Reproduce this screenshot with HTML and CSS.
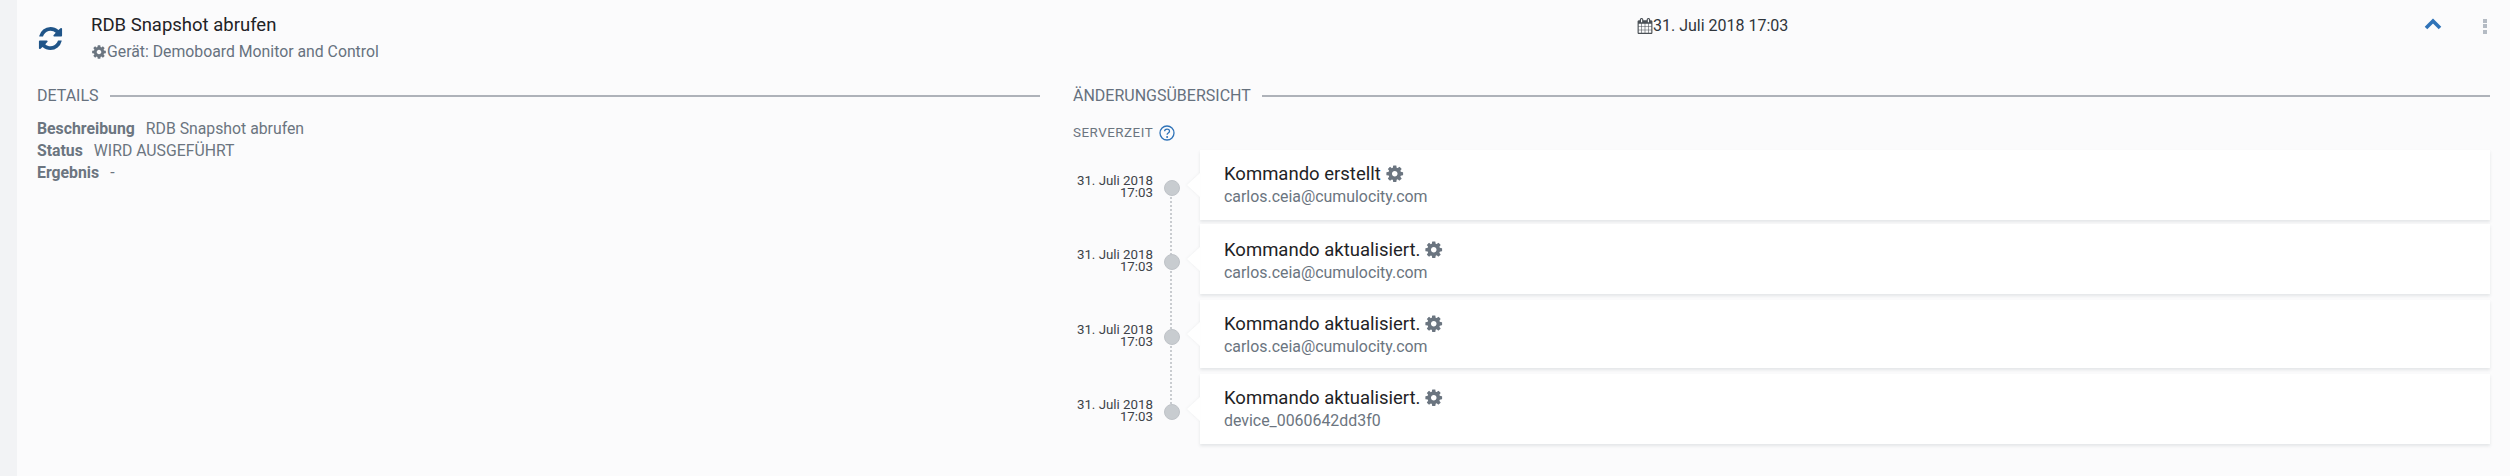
FILE: index.html
```html
<!DOCTYPE html>
<html lang="de">
<head>
<meta charset="utf-8">
<title>RDB Snapshot abrufen</title>
<link rel="stylesheet" href="styles.css">
</head>
<body>
<svg class="defs" width="0" height="0" aria-hidden="true">
  <symbol id="cog" viewBox="0 0 1792 1792"><path d="M1152 896q0-106-75-181t-181-75-181 75-75 181 75 181 181 75 181-75 75-181zm512-109v222q0 12-8 23t-20 13l-185 28q-19 54-39 91 35 50 107 138 10 12 10 25t-9 23q-27 37-99 108t-94 71q-12 0-26-9l-138-108q-44 23-91 38-16 136-29 186-7 28-36 28h-222q-14 0-24.5-8.5t-11.5-21.5l-28-184q-49-16-90-37l-141 107q-10 9-25 9-14 0-25-11-126-114-165-168-7-10-7-23 0-12 8-23 15-21 51-66.5t54-70.5q-27-50-41-99l-183-27q-13-2-21-12.5t-8-23.5v-222q0-12 8-23t19-13l186-28q14-46 39-92-40-57-107-138-10-12-10-24 0-10 9-23 26-36 98.5-107.5t94.5-71.5q13 0 26 10l138 107q44-23 91-38 16-136 29-186 7-28 36-28h222q14 0 24.5 8.5t11.5 21.5l28 184q49 16 90 37l142-107q9-9 24-9 13 0 25 10 129 119 165 170 7 8 7 22 0 12-8 23-15 21-51 66.5t-54 70.5q26 50 41 98l183 28q13 2 21 12.5t8 23.5z"/></symbol>
</svg>
<div class="page">
  <div class="strip"></div>
  <main class="main">
    <header class="head">
      <svg class="refresh" viewBox="0 0 1792 1792"><path d="M1639 1056q0 5-1 7-64 268-268 434.5t-478 166.5q-146 0-282.5-55t-243.5-157l-129 129q-19 19-45 19t-45-19-19-45v-448q0-26 19-45t45-19h448q26 0 45 19t19 45-19 45l-137 137q71 66 161 102t187 36q134 0 250-65t186-179q11-17 53-117 8-23 30-23h192q13 0 22.5 9.5t9.5 22.5zm25-800v448q0 26-19 45t-45 19h-448q-26 0-45-19t-19-45 19-45l138-138q-148-137-349-137-134 0-250 65t-186 179q-11 17-53 117-8 23-30 23h-199q-13 0-22.5-9.5t-9.5-22.5v-7q65-268 270-434.5t480-166.5q146 0 284 55.5t245 156.5l130-129q19-19 45-19t45 19 19 45z"/></svg>
      <div class="head-title">
        <div class="title">RDB Snapshot abrufen</div>
        <div class="device"><svg class="cog-s"><use href="#cog"/></svg>Gerät: Demoboard Monitor and Control</div>
      </div>
      <div class="head-date">
        <svg class="cal" viewBox="0 0 1792 1792"><path d="M192 1664h288v-288h-288v288zm352 0h320v-288h-320v288zm-352-352h288v-320h-288v320zm352 0h320v-320h-320v320zm-352-384h288v-288h-288v288zm736 736h320v-288h-320v288zm-384-736h320v-288h-320v288zm768 736h288v-288h-288v288zm-384-352h320v-320h-320v320zm-352-864v-288q0-13-9.5-22.5t-22.5-9.5h-64q-13 0-22.5 9.5t-9.5 22.5v288q0 13 9.5 22.5t22.5 9.5h64q13 0 22.5-9.5t9.5-22.5zm736 864h288v-320h-288v320zm-384-384h320v-288h-320v288zm384 0h288v-288h-288v288zm32-480v-288q0-13-9.5-22.5t-22.5-9.5h-64q-13 0-22.5 9.5t-9.5 22.5v288q0 13 9.5 22.5t22.5 9.5h64q13 0 22.5-9.5t9.5-22.5zm384-64v1280q0 52-38 90t-90 38h-1408q-52 0-90-38t-38-90v-1280q0-52 38-90t90-38h128v-96q0-66 47-113t113-47h64q66 0 113 47t47 113v96h384v-96q0-66 47-113t113-47h64q66 0 113 47t47 113v96h128q52 0 90 38t38 90z"/></svg>31. Juli 2018 17:03
      </div>
      <svg class="chev" viewBox="0 0 18 12"><path d="M2 10l7-7 7 7"/></svg>
      <div class="dots"><i></i><i></i><i></i></div>
    </header>
    <div class="cols">
      <section class="details">
        <h2 class="sect"><span>DETAILS</span></h2>
        <p class="row"><b>Beschreibung</b>RDB Snapshot abrufen</p>
        <p class="row"><b>Status</b>WIRD AUSGEFÜHRT</p>
        <p class="row"><b>Ergebnis</b>-</p>
      </section>
      <section class="changes">
        <h2 class="sect"><span>ÄNDERUNGSÜBERSICHT</span></h2>
        <div class="server">SERVERZEIT
          <svg class="help" viewBox="0 0 16 16"><circle cx="8" cy="8" r="7"/><path d="M5.6 6.3c0-3 4.9-3 4.900 0 0 1.800-2.400 1.700-2.400 3.400"/><circle class="dot" cx="8.100" cy="12" r="1"/></svg>
        </div>
        <ol class="timeline">
          <li class="item">
            <div class="when">31. Juli 2018<br>17:03</div><span class="node"></span>
            <div class="card"><div class="msg">Kommando erstellt <svg class="cog-m"><use href="#cog"/></svg></div><div class="who">carlos.ceia@cumulocity.com</div></div>
          </li>
          <li class="item">
            <div class="when">31. Juli 2018<br>17:03</div><span class="node"></span>
            <div class="card"><div class="msg">Kommando aktualisiert. <svg class="cog-m"><use href="#cog"/></svg></div><div class="who">carlos.ceia@cumulocity.com</div></div>
          </li>
          <li class="item">
            <div class="when">31. Juli 2018<br>17:03</div><span class="node"></span>
            <div class="card"><div class="msg">Kommando aktualisiert. <svg class="cog-m"><use href="#cog"/></svg></div><div class="who">carlos.ceia@cumulocity.com</div></div>
          </li>
          <li class="item">
            <div class="when">31. Juli 2018<br>17:03</div><span class="node"></span>
            <div class="card"><div class="msg">Kommando aktualisiert. <svg class="cog-m"><use href="#cog"/></svg></div><div class="who">device_0060642dd3f0</div></div>
          </li>
        </ol>
      </section>
    </div>
  </main>
</div>
</body>
</html>
```

FILE: styles.css
```css
* { box-sizing: border-box; }
html, body { margin: 0; padding: 0; }
body {
  width: 2510px;
  height: 476px;
  overflow: hidden;
  font-family: Roboto, "Liberation Sans", sans-serif;
  background: #fbfbfc;
  color: #6b7580;
}
.defs { position: absolute; }
.page { display: flex; height: 476px; }
.strip { width: 17px; background: #f2f3f5; flex: none; }
.main { flex: 1; padding-right: 20px; }

.head { display: flex; align-items: flex-start; height: 86px; }
.refresh { width: 27px; height: 27px; fill: #1f5488; margin: 25px 0 0 20px; flex: none; }
.head-title { width: 1546px; margin-left: 27px; padding-top: 13px; flex: none; }
.title { font-size: 18.500px; line-height: 24px; color: #1f2326; }
.device { font-size: 15.800px; line-height: 20px; margin-top: 5px; color: #67727f; display: flex; align-items: center; }
.cog-s { width: 16px; height: 16px; fill: #6b7580; }
.head-date { font-size: 16px; line-height: 20px; padding-top: 16px; color: #2f353b; display: flex; align-items: center; width: 787px; flex: none; height: 36px; }
.cal { width: 16px; height: 16px; fill: #4a5056; }
.chev { width: 18px; height: 12px; margin-top: 18px; fill: none; stroke: #2f73b8; stroke-width: 3.6; flex: none; }
.dots { display: flex; flex-direction: column; gap: 1.300px; margin: 19px 0 0 41px; flex: none; }
.dots i { display: block; width: 4px; height: 4px; background: #b4bbc4; }

.cols { display: grid; grid-template-columns: 1003px 1417px; gap: 33px; padding-left: 20px; }
.sect { margin: 0; display: flex; align-items: center; gap: 11px; font-size: 16px; line-height: 20px; font-weight: 400; color: #66717e; height: 20px; }
.sect::after { content: ""; flex: 1; height: 2px; background: #aeb2b9; }
.row { margin: 0; font-size: 15.800px; line-height: 22px; color: #6b7580; }
.row b { margin-right: 11px; font-weight: 700; color: #6b7580; }
.details .sect { margin-bottom: 12px; }

.server { font-size: 13.400px; line-height: 18px; margin-top: 18px; letter-spacing: .5px; display: flex; align-items: center; gap: 6px; color: #6b7580; }
.help { width: 16px; height: 16px; fill: none; stroke: #2f73b8; stroke-width: 1.300; }
.help .dot { fill: #2f73b8; stroke: none; }

.timeline { list-style: none; margin: 8px 0 0; padding: 0; display: flex; flex-direction: column; gap: 4px; }
.item { display: grid; grid-template-columns: 80px 16px 1fr; column-gap: 11px; height: 70px; align-items: center; }
.item:nth-child(3) { height: 68px; margin-top: 2px; }
.item:nth-child(4) { margin-top: 2px; }
.when { font-size: 13.300px; line-height: 12px; text-align: right; color: #3d4349; margin-top: 4px; white-space: nowrap; }
.node { position: relative; width: 16px; height: 16px; margin-top: 6px; border-radius: 50%; background: #c8ccd0; border: 1px solid #bfc3c8; }
.item:not(:last-child) .node::after { content: ""; position: absolute; left: 5px; top: 16px; height: 58px; border-left: 2px dotted #c9ccd0; }
.card { position: relative; margin-left: 9px; height: 100%; padding: 12px 24px 0; background: #fff; box-shadow: 0 2px 3px rgba(60, 70, 80, .12); }
.item:nth-child(2) .card { padding-top: 14px; }
.item:nth-child(2) .who { margin-top: 1px; }
.card::before { content: ""; position: absolute; left: -13px; top: 50%; margin-top: -12px; border: solid transparent; border-width: 12px 13px 12px 0; border-right-color: #fff; filter: drop-shadow(-1px 0 1px rgba(60, 70, 80, .05)); }
.msg { font-size: 18.500px; line-height: 24px; color: #1f2326; display: flex; align-items: center; gap: 4px; }
.cog-m { width: 19.500px; height: 19.500px; fill: #6b7580; }
.who { font-size: 15.900px; line-height: 20px; margin-top: 1px; color: #6b7580; }
```
